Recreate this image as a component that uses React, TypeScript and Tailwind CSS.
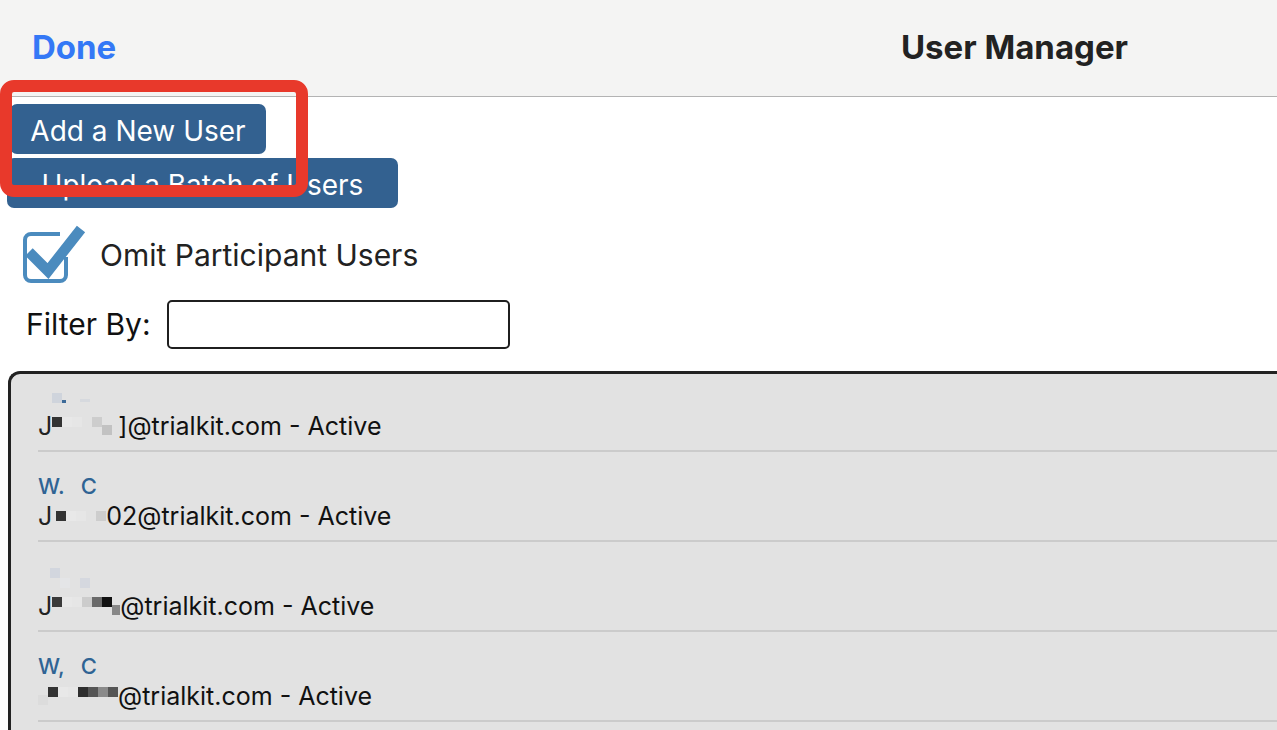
import type { ReactNode } from 'react'

const FONT = { fontFamily: 'Inter, "Noto Sans", "Liberation Sans", sans-serif' }

type Block = { w: number; c: string; dy?: number; h?: number }

// redaction squares, drawn in the text flow
function Pix({ blocks }: { blocks: Block[] }) {
  return (
    <span className="inline-flex items-start align-middle">
      {blocks.map((b, i) => (
        <span
          key={i}
          className="inline-block"
          style={{ width: b.w, height: b.h ?? 10, background: b.c, marginTop: b.dy ?? 0 }}
        />
      ))}
    </span>
  )
}

type Row = { name: ReactNode; email: ReactNode; first?: boolean }

const rows: Row[] = [
  {
    first: true,
    name: (
      <Pix
        blocks={[
          { w: 14, c: 'transparent' },
          { w: 10, c: '#cfd4dc' },
          { w: 4, c: '#3d6a98', dy: 7, h: 3 },
          { w: 14, c: 'transparent' },
          { w: 10, c: '#d6d9de', dy: 6, h: 3 },
        ]}
      />
    ),
    email: (
      <>
        <span className="text-[#222]">J</span>
        <Pix
          blocks={[
            { w: 10, c: '#333' },
            { w: 10, c: '#e8e8e8' },
            { w: 10, c: '#e6e6e6' },
            { w: 10, c: 'transparent' },
            { w: 10, c: '#cdcdcd' },
            { w: 10, c: '#c2c2c2', dy: 8 },
          ]}
        />
        <span className="ml-[6px]">]@trialkit.com - Active</span>
      </>
    ),
  },
  {
    name: (
      <span className="text-[#2f6494]">
        W.<span className="ml-[16px]">C</span>
      </span>
    ),
    email: (
      <>
        <span className="text-[#222]">J</span>
        <Pix
          blocks={[
            { w: 4, c: 'transparent' },
            { w: 10, c: '#333' },
            { w: 10, c: '#e8e8e8' },
            { w: 10, c: '#e6e6e6' },
            { w: 10, c: 'transparent' },
            { w: 10, c: '#cdcdcd' },
          ]}
        />
        <span>02@trialkit.com - Active</span>
      </>
    ),
  },
  {
    name: (
      <Pix
        blocks={[
          { w: 12, c: 'transparent' },
          { w: 10, c: '#d2d6de' },
          { w: 10, c: '#e4e5e7', dy: 10 },
          { w: 10, c: 'transparent' },
          { w: 10, c: '#d5d8df', dy: 10 },
        ]}
      />
    ),
    email: (
      <>
        <span className="text-[#222]">J</span>
        <Pix
          blocks={[
            { w: 10, c: '#3a3a3a' },
            { w: 10, c: '#e8e8e8' },
            { w: 10, c: '#e6e6e6' },
            { w: 10, c: '#cccccc' },
            { w: 10, c: '#6a6a6a' },
            { w: 10, c: '#111' },
            { w: 8, c: '#888', dy: 8 },
          ]}
        />
        <span>@trialkit.com - Active</span>
      </>
    ),
  },
  {
    name: (
      <span className="text-[#2f6494]">
        W,<span className="ml-[16px]">C</span>
      </span>
    ),
    email: (
      <>
        <Pix
          blocks={[
            { w: 10, c: '#dcdcdc', dy: 8 },
            { w: 10, c: '#333' },
            { w: 10, c: '#e8e8e8' },
            { w: 10, c: '#e6e6e6' },
            { w: 10, c: '#2e2e2e' },
            { w: 10, c: '#555' },
            { w: 10, c: '#8a8a8a' },
            { w: 10, c: '#555' },
          ]}
        />
        <span>@trialkit.com - Active</span>
      </>
    ),
  },
]

function CheckIcon() {
  return (
    <svg width="66" height="66" viewBox="0 0 66 66" fill="none">
      <path
        d="M46 37V55a6 6 0 0 1-6 6H11a6 6 0 0 1-6-6V20a6 6 0 0 1 6-6H40"
        stroke="#4b8bbe"
        strokeWidth="4"
      />
      <path d="M9 32 28 51 61 9" stroke="#4b8bbe" strokeWidth="10.5" />
    </svg>
  )
}

export default function App() {
  return (
    <div className="relative w-[1277px] h-[730px] overflow-hidden bg-white text-[#222]" style={FONT}>
      <header className="flex h-[97px] items-center justify-between bg-[#f4f4f3] border-b border-[#b3b3b3] pl-[32px] pr-[149px]">
        <button className="text-[33px] font-bold text-[#3478f6]">Done</button>
        <h1 className="text-[33px] font-bold text-[#222]">User Manager</h1>
      </header>

      <div className="flex flex-col items-start pt-[7px]">
        <button className="ml-[10px] h-[50px] w-[256px] rounded-[7px] bg-[#336190] pt-[3px] text-[28px] text-white">
          Add a New User
        </button>
        <button className="ml-[7px] mt-[4px] h-[50px] w-[391px] rounded-[7px] bg-[#336190] pt-[3px] text-[28px] text-white">
          Upload a Batch of Users
        </button>

        <label className="ml-[20px] mt-[12px] flex items-center gap-[14px]">
          <CheckIcon />
          <span className="pt-[3px] text-[30px] leading-[40px] text-[#222]">Omit Participant Users</span>
        </label>

        <div className="ml-[26px] mt-[14px] flex items-center gap-[16px]">
          <span className="text-[30px] text-[#111]">Filter By:</span>
          <input className="h-[49px] w-[343px] rounded-[5px] border-2 border-[#1f1f1f] bg-white px-2 text-[24px] outline-none" />
        </div>

        <div className="ml-[8px] mt-[22px] h-[400px] w-[1300px] rounded-tl-[12px] border-l-[3px] border-t-[3px] border-[#222] bg-[#e2e2e2]">
          {rows.map((r, i) => (
            <div
              key={i}
              className={`ml-[27px] flex flex-col justify-end gap-[4px] border-b-2 border-[#cbcbcb] pb-[10px] ${r.first ? 'h-[78px]' : 'h-[90px]'}`}
            >
              <div className="h-[24px] text-[22px] leading-[24px] font-medium">{r.name}</div>
              <div className="flex h-[28px] items-center text-[25px] leading-[28px] text-[#111]">{r.email}</div>
            </div>
          ))}
        </div>
      </div>

      {/* annotation box */}
      <div className="pointer-events-none absolute left-0 top-[80px] h-[117px] w-[308px] rounded-[14px] border-[12px] border-[#e8392b]" />
    </div>
  )
}
